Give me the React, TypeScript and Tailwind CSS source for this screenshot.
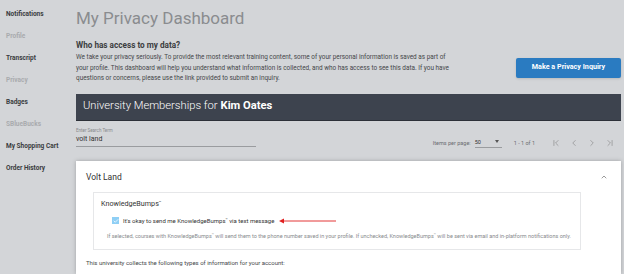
import { ChevronUp, ChevronLeft, ChevronRight, ChevronFirst, ChevronLast, Check } from "lucide-react";

const navItems = [
    { label: "Notifications", dim: false },
    { label: "Profile", dim: true },
    { label: "Transcript", dim: false },
    { label: "Privacy", dim: true },
    { label: "Badges", dim: false },
    { label: "SBlueBucks", dim: true },
    { label: "My Shopping Cart", dim: false },
    { label: "Order History", dim: false },
];

export default function App() {
    return (
        <div
            className="flex w-[624px] h-[274px] overflow-hidden bg-[#d3d5d8] text-[#333]"
            style={{ fontFamily: "Roboto, 'Liberation Sans', sans-serif" }}
        >
            {/* sidebar */}
            <nav className="w-[76px] shrink-0 pl-[6px] pt-[9px] flex flex-col gap-[12px]">
                {navItems.map((item) => (
                    <span
                        key={item.label}
                        className={
                            "text-[6.5px] font-bold leading-[10px] whitespace-nowrap " +
                            (item.dim ? "text-[#a9abae]" : "text-[#3a3c40]")
                        }
                    >
                        {item.label}
                    </span>
                ))}
            </nav>

            {/* main */}
            <main className="flex-1 flex flex-col pr-[3px]">
                <h1 className="text-[17px] leading-[22px] mt-[7px] text-[#8a8c8f] font-normal">
                    My Privacy Dashboard
                </h1>
                <h2 className="text-[8.2px] font-bold text-[#3b3d40] mt-[11px] leading-[10px]">
                    Who has access to my data?
                </h2>
                <div className="flex items-center justify-between mt-[2px]">
                    <p className="text-[6.4px] leading-[10.5px] text-[#45474a] w-[376px]">
                        We take your privacy seriously. To provide the most relevant training content, some of your personal information is saved as part of your profile. This dashboard will help you understand what information is collected, and who has access to see this data. If you have questions or concerns, please use the link provided to submit an inquiry.
                    </p>
                    <button className="w-[105px] h-[20px] bg-[#2a7bc1] text-white text-[7.2px] font-bold rounded-[2px] shadow-sm">
                        Make a Privacy Inquiry
                    </button>
                </div>

                <div className="mt-[10px] h-[27px] bg-[#3d434e] flex items-center pl-[7px] text-white text-[11.2px] font-light border-b border-[#2c3038]">
                    University Memberships for <b className="font-bold ml-[3px]">Kim Oates</b>
                </div>

                <div className="flex items-start justify-between h-[40px] pt-[7px]">
                    <div className="w-[180px] border-b border-[#9a9c9f] pb-[2px]">
                        <div className="text-[4.5px] text-[#888a8d] leading-[6px]">Enter Search Term</div>
                        <div className="text-[7px] text-[#333] leading-[9px] mt-[1px]">volt land</div>
                    </div>
                    <div className="flex items-center text-[5.5px] text-[#6a6c70] mr-[6px] mt-[10px]">
                        <span>Items per page:</span>
                        <span className="ml-[4px] w-[27px] border-b border-[#9a9c9f] flex justify-between items-center text-[#333] pb-[1px]">
                            50
                            <span className="w-0 h-0 border-l-[2.5px] border-r-[2.5px] border-t-[3px] border-l-transparent border-r-transparent border-t-[#555] mr-[3px]" />
                        </span>
                        <span className="ml-[12px]">1 - 1 of 1</span>
                        <div className="flex ml-[16px] gap-[8px] text-[#777]">
                            <ChevronFirst size={10} strokeWidth={1.3} />
                            <ChevronLeft size={10} strokeWidth={1.3} />
                            <ChevronRight size={10} strokeWidth={1.3} />
                            <ChevronLast size={10} strokeWidth={1.3} />
                        </div>
                    </div>
                </div>

                {/* card */}
                <section className="flex-1 bg-white shadow-[0_0_4px_rgba(0,0,0,0.25)] px-[10px] pt-[11px]">
                    <div className="flex items-center justify-between leading-[10px]">
                        <span className="text-[8.5px] text-[#333]">Volt Land</span>
                        <ChevronUp size={8} strokeWidth={2} className="text-[#666] mr-[3px]" />
                    </div>
                    <div className="mt-[10px] ml-[7px] mr-[30px] border border-[#e6e7e9] px-[7px] pt-[6px] pb-[9px]">
                        <div className="text-[7.2px] text-[#333] leading-[10px]">
                            KnowledgeBumps<sup className="text-[4px]">™</sup>
                        </div>
                        <label className="flex items-center mt-[7px] ml-[11px] h-[10px]">
                            <span className="w-[7px] h-[7px] bg-[#8fcff5] flex items-center justify-center">
                                <Check size={6} strokeWidth={3} className="text-white" />
                            </span>
                            <span className="ml-[4px] text-[6px] text-[#333]">
                                It's okay to send me KnowledgeBumps<sup className="text-[3.5px]">™</sup> via text message
                            </span>
                            <svg width="60" height="6" viewBox="0 0 60 6" className="ml-[5px]">
                                <polygon points="0,3 5,0.5 5,5.5" fill="#e02020" />
                                <line x1="4" y1="3" x2="57" y2="3" stroke="#e02020" strokeWidth="0.9" />
                            </svg>
                        </label>
                        <p className="mt-[6px] ml-[6px] text-[5.5px] leading-[8px] text-[#888a8d] whitespace-nowrap">
                            If selected, courses with KnowledgeBumps<sup className="text-[3.5px]">™</sup> will send them to the phone number saved in your profile. If unchecked, KnowledgeBumps<sup className="text-[3.5px]">™</sup> will be sent via email and in-platform notifications only.
                        </p>
                    </div>
                    <p className="mt-[8px] text-[6px] leading-[9px] text-[#45474a]">
                        This university collects the following types of information for your account:
                    </p>
                </section>
            </main>
        </div>
    );
}
